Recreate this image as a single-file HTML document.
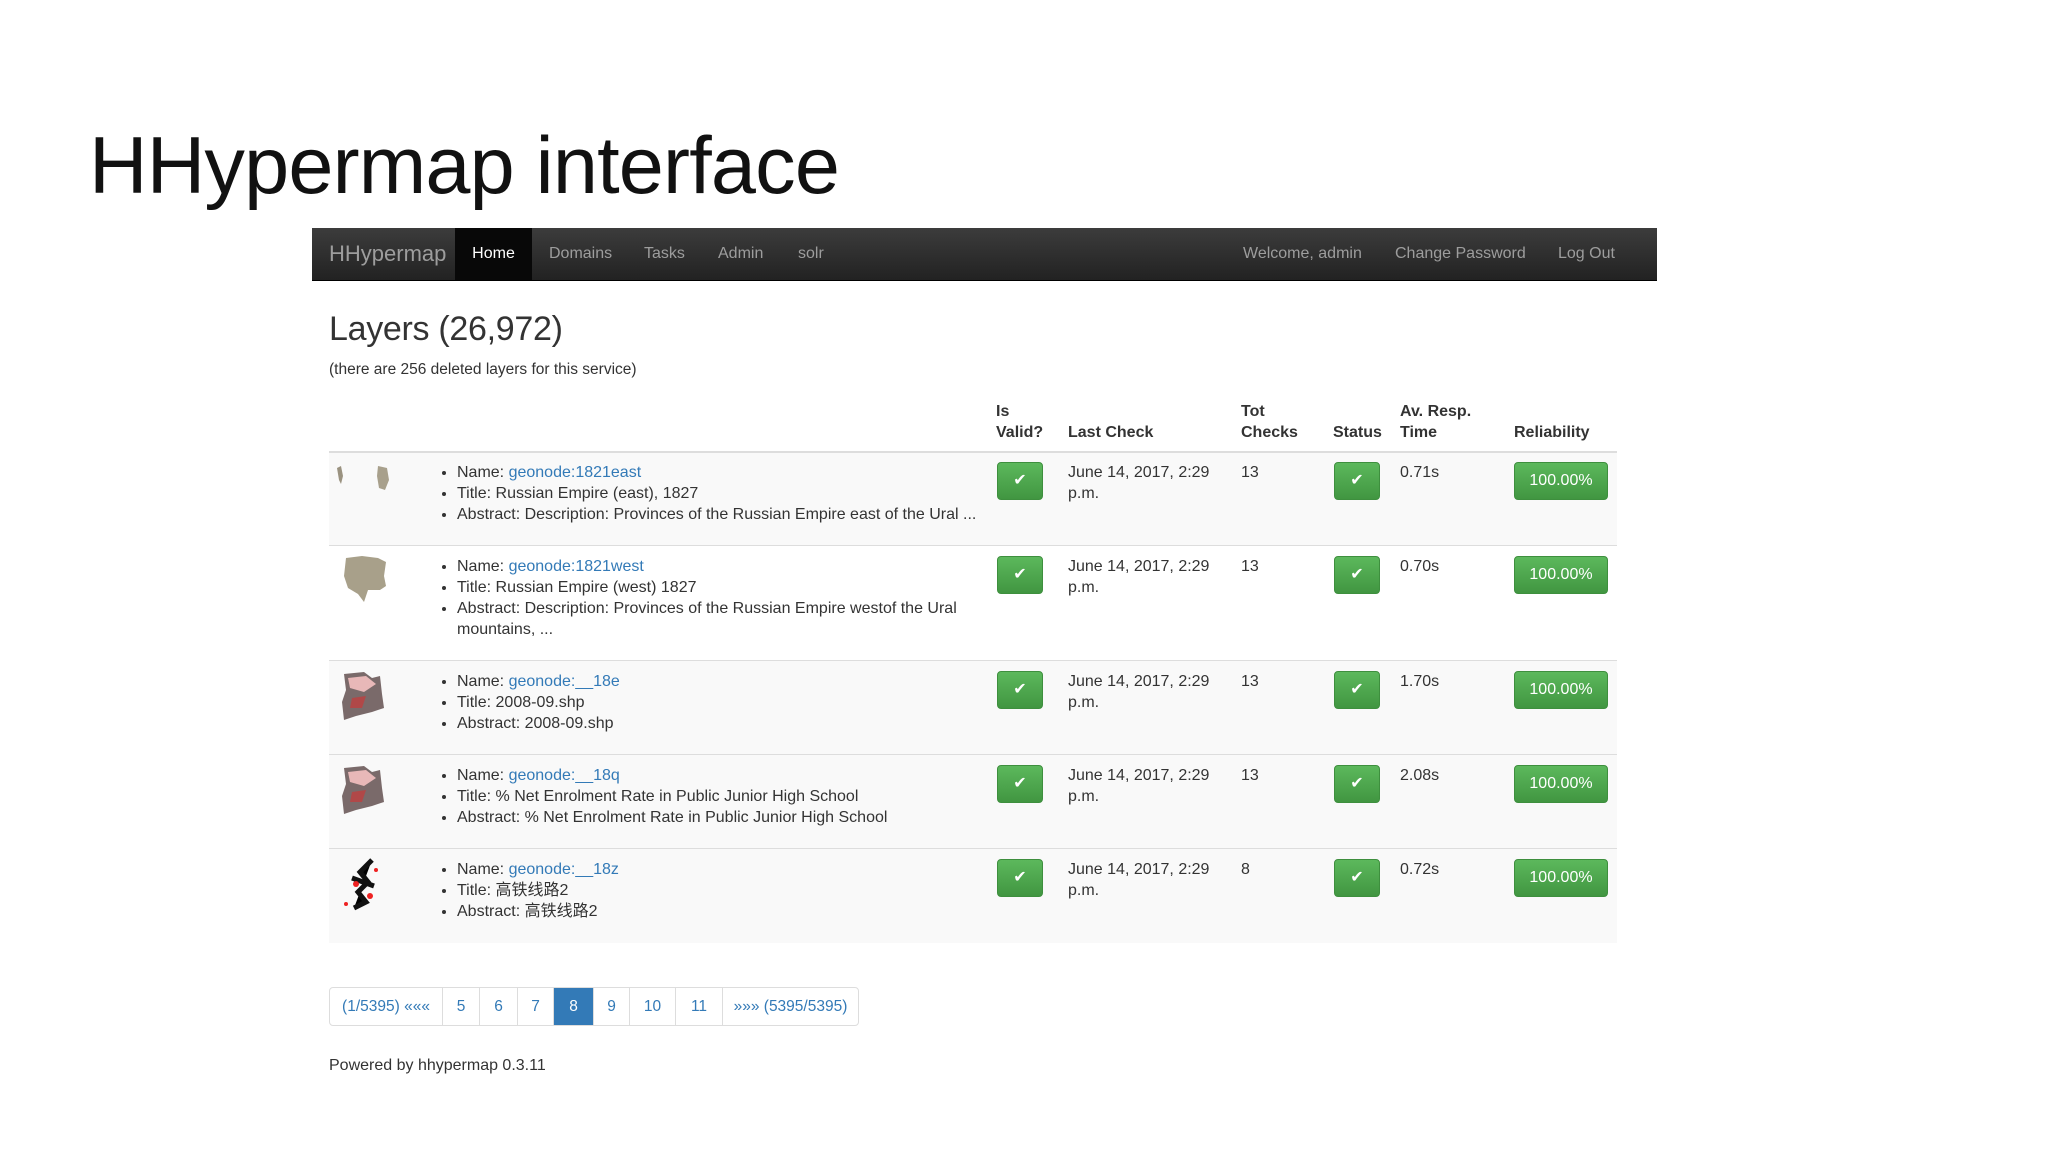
<!DOCTYPE html>
<html><head><meta charset="utf-8"><style>
*{margin:0;padding:0;box-sizing:border-box}
body{width:2048px;height:1152px;background:#fff;font-family:"Liberation Sans","Noto Sans CJK SC",sans-serif;color:#333;position:relative;overflow:hidden}
.abs{position:absolute}
h1{position:absolute;left:89px;top:120px;font-size:81px;font-weight:normal;color:#111;letter-spacing:-0.8px;white-space:nowrap}
.nav{left:312px;top:228px;width:1345px;height:53px;background:linear-gradient(#3c3c3c,#222);border-bottom:1px solid #000}
.nav span{position:absolute;top:0;line-height:52px;font-size:16px;color:#9d9d9d}
.nav .brand{font-size:22px;left:17px}
.nav .act{left:143px;width:77px;background:#080808;color:#fff;text-align:center}
.h2{left:329px;top:310px;font-size:34px;color:#333;letter-spacing:-0.3px}
.sub{left:329px;top:361px;font-size:15.5px}
.th{font-size:16px;font-weight:bold;line-height:21px;top:401px}
.hline{left:329px;width:1288px;height:2px;background:#ddd}
.row{left:329px;width:1288px;border-bottom:1px solid #ddd}
.txt{font-size:16px;line-height:21px}
ul{list-style:disc;position:absolute;left:457px;font-size:16px;line-height:21px;width:520px}
a{color:#337ab7;text-decoration:none}
.btn{position:absolute;height:38px;background:linear-gradient(#5cb85c,#419641);border:1px solid #3e8f3e;border-radius:4px;color:#fff;text-align:center;line-height:36px;font-size:16px}
.chk{width:46px}
.pag{left:329px;top:987px;height:39px;border:1px solid #ddd;border-radius:4px;display:flex;font-size:15.5px}
.pag div{border-left:1px solid #ddd;line-height:37px;text-align:center;color:#337ab7;white-space:nowrap}
.pag div:first-child{border-left:none}
.pag .on{background:#337ab7;color:#fff}
</style></head><body>
<h1>HHypermap interface</h1>
<div class="abs nav">
<span class="brand">HHypermap</span>
<span class="act">Home</span>
<span style="left:237px">Domains</span>
<span style="left:332px">Tasks</span>
<span style="left:406px">Admin</span>
<span style="left:486px">solr</span>
<span style="left:931px">Welcome, admin</span>
<span style="left:1083px">Change Password</span>
<span style="left:1246px">Log Out</span>
</div>
<div class="abs h2">Layers (26,972)</div>
<div class="abs sub">(there are 256 deleted layers for this service)</div>
<div class="abs th" style="left:996px">Is<br>Valid?</div>
<div class="abs th" style="left:1068px">&nbsp;<br>Last Check</div>
<div class="abs th" style="left:1241px">Tot<br>Checks</div>
<div class="abs th" style="left:1333px">&nbsp;<br>Status</div>
<div class="abs th" style="left:1400px">Av. Resp.<br>Time</div>
<div class="abs th" style="left:1514px">&nbsp;<br>Reliability</div>
<div class="abs hline" style="top:451px"></div>

<div class="abs row" style="top:453px;height:93px;background:#f9f9f9"></div>
<div class="abs row" style="top:546px;height:115px;background:#fff"></div>
<div class="abs row" style="top:661px;height:94px;background:#f9f9f9"></div>
<div class="abs row" style="top:755px;height:94px;background:#f9f9f9"></div>
<div class="abs" style="left:329px;top:849px;width:1288px;height:94px;background:#f9f9f9"></div>

<svg class="abs" style="left:335px;top:462px" width="70" height="45"><path d="M2 6 L6 4 L8 14 L6 22 L4 18Z" fill="#9a9280"/><path d="M43 4 L52 6 L54 18 L50 28 L44 26 L42 14Z" fill="#a8a08c"/></svg>
<svg class="abs" style="left:340px;top:554px" width="60" height="60"><path d="M6 4 L22 2 L38 4 L46 8 L44 22 L46 32 L40 36 L28 36 L24 48 L18 40 L8 34 L4 22Z" fill="#a8a08a"/></svg>
<svg class="abs" style="left:336px;top:668px" width="65" height="60"><path d="M8 6 L28 4 L36 10 L44 8 L46 26 L48 40 L36 44 L20 48 L8 52 L6 34 L10 22Z" fill="#7a6a6a"/><path d="M12 10 L30 8 L40 16 L28 24 L14 20Z" fill="#e8b8b8"/><path d="M16 30 L30 28 L26 40 L14 40Z" fill="#b04848"/></svg>
<svg class="abs" style="left:336px;top:762px" width="65" height="60"><path d="M8 6 L28 4 L36 10 L44 8 L46 26 L48 40 L36 44 L20 48 L8 52 L6 34 L10 22Z" fill="#7a6a6a"/><path d="M12 10 L30 8 L40 16 L28 24 L14 20Z" fill="#e8b8b8"/><path d="M16 30 L30 28 L26 40 L14 40Z" fill="#b04848"/></svg>
<svg class="abs" style="left:338px;top:856px" width="60" height="60"><g stroke="#111" stroke-width="5"><path d="M34 4 L22 16 L30 26 L20 36 L28 46 L16 52"/><path d="M14 22 L36 30"/></g><g fill="#e22"><circle cx="18" cy="28" r="3"/><circle cx="32" cy="40" r="3"/><circle cx="8" cy="48" r="2"/><circle cx="38" cy="14" r="2"/></g></svg>

<ul style="top:462px"><li>Name: <a>geonode:1821east</a></li><li>Title: Russian Empire (east), 1827</li><li>Abstract: Description: Provinces of the Russian Empire east of the Ural ...</li></ul>
<ul style="top:556px"><li>Name: <a>geonode:1821west</a></li><li>Title: Russian Empire (west) 1827</li><li>Abstract: Description: Provinces of the Russian Empire westof the Ural mountains, ...</li></ul>
<ul style="top:671px"><li>Name: <a>geonode:__18e</a></li><li>Title: 2008-09.shp</li><li>Abstract: 2008-09.shp</li></ul>
<ul style="top:765px"><li>Name: <a>geonode:__18q</a></li><li>Title: % Net Enrolment Rate in Public Junior High School</li><li>Abstract: % Net Enrolment Rate in Public Junior High School</li></ul>
<ul style="top:859px"><li>Name: <a>geonode:__18z</a></li><li>Title: 高铁线路2</li><li>Abstract: 高铁线路2</li></ul>

<div id="cells"></div>
<script>
var tops=[462,556,671,765,859],tot=["13","13","13","13","8"],av=["0.71s","0.70s","1.70s","2.08s","0.72s"];
var h="";
tops.forEach(function(t,i){
h+='<div class="btn chk" style="left:997px;top:'+t+'px">✔</div>';
h+='<div class="abs txt" style="left:1068px;top:'+t+'px">June 14, 2017, 2:29<br>p.m.</div>';
h+='<div class="abs txt" style="left:1241px;top:'+t+'px">'+tot[i]+'</div>';
h+='<div class="btn chk" style="left:1334px;top:'+t+'px">✔</div>';
h+='<div class="abs txt" style="left:1400px;top:'+t+'px">'+av[i]+'</div>';
h+='<div class="btn" style="left:1514px;top:'+t+'px;width:94px">100.00%</div>';
});
document.getElementById("cells").innerHTML=h;
</script>
<div class="abs pag">
<div style="width:112px">(1/5395) «««</div>
<div style="width:37px">5</div>
<div style="width:38px">6</div>
<div style="width:36px">7</div>
<div class="on" style="width:40px">8</div>
<div style="width:36px">9</div>
<div style="width:46px">10</div>
<div style="width:47px">11</div>
<div style="width:136px">»»» (5395/5395)</div>
</div>
<div class="abs txt" style="left:329px;top:1055px">Powered by hhypermap 0.3.11</div>
</body></html>
